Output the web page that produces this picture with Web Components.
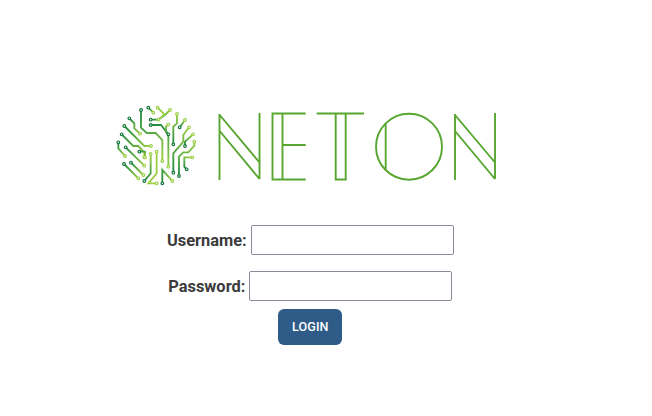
<!DOCTYPE html>
<html lang="en"><head><meta charset="utf-8"><title>Neton Login</title>
<style>html,body{margin:0;padding:0;background:#fff}</style></head>
<body>
<login-page></login-page>
<template id="logo-t">
<style>:host{display:block;width:400px;height:100px}svg{display:block}
.w{fill:none;stroke:#57a62f;stroke-width:1.9}</style>
<svg width="400" height="100" viewBox="105 95 400 100" role="img" aria-label="Neton logo">
<defs id="defs"></defs>
<g id="mark" transform="translate(105 95) scale(.3333)"></g>
<g class="w">
<path d="M219.5 114V180M219.7 115L259.5 162.5M219.7 131L259.5 179M259.5 113V179"/>
<path d="M305.7 113.5H272.5V179.5H305.7M282.5 113.5V179.5M282.5 145H305.7"/>
<path d="M316.7 113.5H364M335.7 113.5V179.5H345.7V113.5"/>
<circle cx="409" cy="146.7" r="33"/><path d="M385.7 124V169"/>
<path d="M455 114V180M455 115L495 162.5M455 131L495 179M495 113V179"/>
</g>
</svg>
</template>
<template id="field-t">
<style>:host{display:flex;align-items:center;gap:4px;height:30px;font:700 16.4px/28px Roboto,sans-serif;color:#3b3b3b}
label{padding-top:2px}
input{box-sizing:border-box;width:203px;height:30px;margin:0;border:1px solid #8b8a99;border-radius:2px;background:#fff;padding:0 6px;outline:none}</style>
<label><slot></slot></label><input>
</template>
<template id="btn-t">
<style>:host{display:block}
button{display:block;box-sizing:border-box;width:64px;height:36px;border:0;border-radius:6px;background:#2f5b88;color:#fff;font:500 12.5px/36px Roboto,sans-serif;padding:0;letter-spacing:.1px}</style>
<button type="button"><slot></slot></button>
</template>
<template id="page-t">
<style>:host{display:flex;flex-direction:column;align-items:center;width:620.6px;padding-top:95px}
neton-logo{align-self:flex-start;margin-left:105px;margin-bottom:30px}
login-field+login-field{margin-top:16px}
login-button{margin-top:8px}</style>
<neton-logo></neton-logo>
<login-field>Username:</login-field>
<login-field>Password:</login-field>
<login-button>LOGIN</login-button>
</template>
<script>
function tpl(id){return document.getElementById(id).content.cloneNode(true)}
const D='#14763c',L='#9ccf45';
const traces=[
[[108,45],[108,98],[125,114],[152,114],[172,135],[172,198],D,L],
[[137,90],[168,90],[190,118],[190,215],D,L],
[[137,74],[160,74],[180,60],[195,45],D,L],
[[130,38],[145,53],D,L],
[[158,38],[178,58],[160,74],L,L],
[[73,70],[88,85],[88,100],[105,116],D,L],
[[58,93],[118,153],[138,153],D,L],
[[50,118],[85,153],[100,153],[118,172],[118,187],D,L],
[[40,142],[40,160],[60,183],D,L],
[[62,157],[118,212],D,L],
[[103,170],[120,170],[120,187],D,L],
[[137,177],[137,235],[118,258],L,D],
[[155,170],[155,235],[130,265],[155,265],L,L],
[[57,207],[100,250],D,L],
[[78,203],[115,240],D,L],
[[172,265],[172,225],[202,258],D,L],
[[205,233],[205,175],[235,140],[235,120],[252,97],D,L],
[[205,148],[205,95],[216,85],[216,57],D,L],
[[190,88],[183,95],[183,110],[190,118],L,D],
[[224,97],[240,75],D,L],
[[222,243],[222,185],[235,172],[250,172],[268,152],[268,140],D,L],
[[240,153],[240,140],[264,118],D,L],
[[262,187],[238,187],[238,215],[245,223],L,D]
];
const NS='http://www.w3.org/2000/svg';
function el(n,a){const e=document.createElementNS(NS,n);for(const k in a)e.setAttribute(k,a[k]);return e}
class NetonLogo extends HTMLElement{constructor(){super();const s=this.attachShadow({mode:'open'});s.appendChild(tpl('logo-t'));
const g=s.getElementById('mark'),defs=s.getElementById('defs');
traces.forEach((t,i)=>{const pts=t.filter(Array.isArray),c1=t[t.length-2],c2=t[t.length-1];
const a=pts[0],b=pts[pts.length-1];
const lg=el('linearGradient',{id:'g'+i,gradientUnits:'userSpaceOnUse',x1:a[0],y1:a[1],x2:b[0]+.01,y2:b[1]+.01});
lg.appendChild(el('stop',{offset:'0',"stop-color":c1==L?L:'#1f8a3e'}));lg.appendChild(el('stop',{offset:'1',"stop-color":c2==L?L:'#1f8a3e'}));defs.appendChild(lg);
g.appendChild(el('polyline',{points:pts.map(p=>p.join(',')).join(' '),fill:'none',stroke:'url(#g'+i+')','stroke-width':'5.5'}));
[[a,c1],[b,c2]].forEach(([p,c])=>g.appendChild(el('circle',{cx:p[0],cy:p[1],r:'4',fill:'#fff',stroke:c,'stroke-width':'3.5'})));
});
}}
class LoginField extends HTMLElement{constructor(){super();this.attachShadow({mode:'open'}).appendChild(tpl('field-t'))}}
class LoginButton extends HTMLElement{constructor(){super();this.attachShadow({mode:'open'}).appendChild(tpl('btn-t'))}}
class LoginPage extends HTMLElement{constructor(){super();this.attachShadow({mode:'open'}).appendChild(tpl('page-t'))}}
customElements.define('neton-logo',NetonLogo);
customElements.define('login-field',LoginField);
customElements.define('login-button',LoginButton);
customElements.define('login-page',LoginPage);
</script>
</body></html>
